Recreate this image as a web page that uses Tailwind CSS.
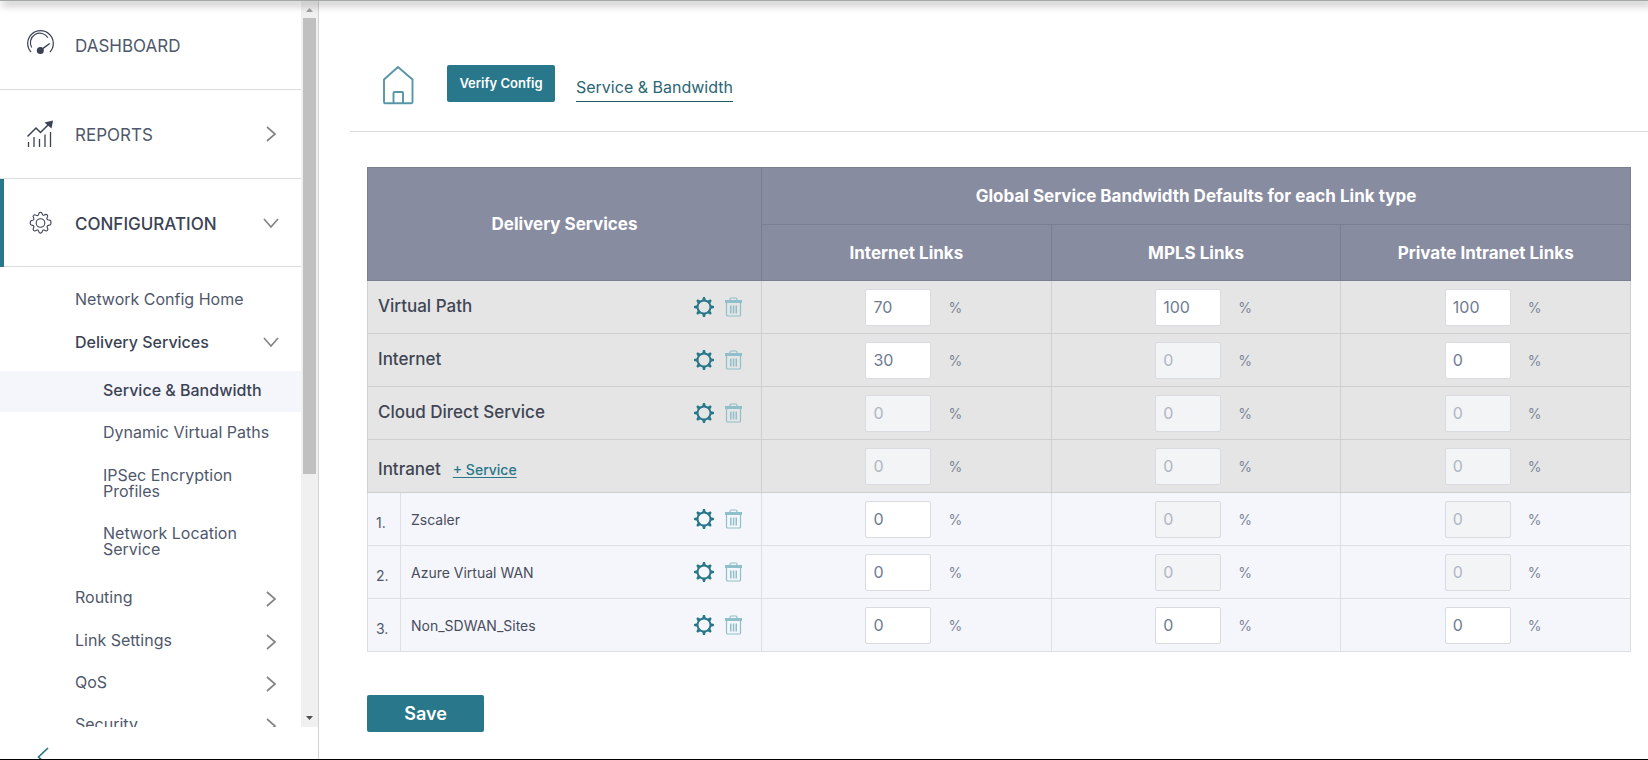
<!DOCTYPE html>
<html lang="en">
<head>
<meta charset="utf-8">
<title>Service &amp; Bandwidth</title>
<script src="https://cdn.jsdelivr.net/npm/@tailwindcss/browser@4"></script>
</head>
<body class="h-screen bg-white font-['Inter','Liberation_Sans',sans-serif] text-[#4f586b]">
<svg class="hidden">
  <symbol id="right" viewBox="0 0 16 16"><path d="M4 1l8 7-8 7" fill="none" stroke="#858585" stroke-width="1.7"/></symbol>
  <symbol id="down" viewBox="0 0 16 16"><path d="M1 4l7 8 7-8" fill="none" stroke="#858585" stroke-width="1.7"/></symbol>
  <symbol id="cog" viewBox="0 0 20 20">
    <circle cx="10" cy="10" r="6.500" fill="none" stroke="#28778a" stroke-width="2"/>
    <path d="M9 0h2l1 4H8zM9 20h2l1-4H8zM0 9v2l4 1V8zM20 9v2l-4 1V8zM2.300 3.700l1.400-1.400 3.500 2-2.900 2.900zM17.700 3.700l-1.400-1.400-3.500 2 2.900 2.900zM2.300 16.300l1.400 1.400 3.500-2-2.900-2.900zM17.700 16.300l-1.400 1.400-3.500-2 2.900-2.900z" fill="#28778a"/>
  </symbol>
  <symbol id="trash" viewBox="0 0 17 20">
    <path d="M5 3.500V2.200C5 1.400 5.500 1 6.200 1h4.600c.7 0 1.200.4 1.200 1.200v1.300M1.500 6v11.700c0 .8.5 1.300 1.300 1.300h11.400c.8 0 1.300-.5 1.300-1.300V6" fill="none" stroke="#8fbfc9" stroke-width="1.200"/>
    <path d="M0 3h17v3H0zM5 8.500h1.500v8H5zM7.800 8.500h1.500v8H7.800zM10.500 8.500H12v8h-1.500z" fill="#8fbfc9"/>
  </symbol>
</svg>
<div class="relative flex h-full flex-col border-b border-black">
  <div class="absolute inset-x-0 top-0 z-10 h-px bg-[#a3a8a6] shadow-[3px_2px_8px_1px_rgba(0,0,0,0.5)]"></div>
  <div class="flex min-h-0 flex-1">
    <aside class="flex w-[319px] shrink-0 flex-col overflow-hidden border-r border-[#d2d3d6]">
      <div class="flex min-h-0 flex-1">
        <nav aria-label="Main" class="min-w-0 flex-1 overflow-hidden pt-px text-[16px] leading-[16px]">
          <a href="#" class="flex h-[89px] items-center border-b border-[#dadbdd] text-[17px]">
            <svg class="ml-[26px] size-[30px] shrink-0" viewBox="0 0 30 30" fill="none" stroke="#3b4254" stroke-width="1.200"><path d="M5 22A12.800 12.800 0 1 1 24 22"/><path d="M5.700 17.500A9.300 9.300 0 0 1 22 7.800"/><path d="M15 19.800l8.700-6.300" stroke-width="1.500"/><circle cx="14.300" cy="20.500" r="3.500" fill="#3b4254" stroke="none"/></svg>
            <span class="ml-[19px] pt-[2px]">DASHBOARD</span>
          </a>
          <a href="#" class="flex h-[89px] items-center border-b border-[#dadbdd] text-[17px]">
            <svg class="ml-[26px] size-[30px] shrink-0" viewBox="0 0 30 30" fill="none" stroke="#3b4254"><path d="M1.500 17.500l8.500-8.500 4.500 4.500 9-9" stroke-width="1.500"/><path d="M18.500 3.500L27 1.500l-1.500 8z" fill="#3b4254" stroke="none"/><path d="M2.500 28v-5M8 28v-10M13.500 28v-8M19 28V15.500M24.500 28V13" stroke-width="1.300"/></svg>
            <span class="ml-[19px] flex-1 pt-[2px]">REPORTS</span>
            <svg class="mr-[22px] size-4"><use href="#right"/></svg>
          </a>
          <a href="#" class="relative flex h-[88px] items-center border-b border-[#dadbdd] text-[17px] font-medium text-[#3b4254]">
            <span class="absolute top-0 -bottom-px left-0 w-1 bg-[#28778a]"></span>
            <svg class="ml-[26px] size-[30px] shrink-0" viewBox="0 0 30 30" fill="none" stroke="#3b4254" stroke-width="1.100" stroke-linejoin="round"><circle cx="14.500" cy="15" r="4.300"/><path d="M12.700 6.200c.2-1.400.7-2 1.800-2s1.600.6 1.800 2c.1.900 1.300 1.300 2.100.8 1.200-.9 2-.9 2.800-.1s.8 1.600-.1 2.800c-.6.800-.1 1.900.9 2.100 1.400.2 2.900.7 2.900 1.900v2.200c0 .9-1.300 1.300-2.700 1.500-1 .2-1.500 1.400-.9 2.200.9 1.200.9 2 .1 2.800s-1.600.8-2.800-.1c-.8-.6-2-.2-2.200.8-.2 1.400-.8 2-1.900 2s-1.700-.6-1.900-2c-.2-1-1.400-1.400-2.200-.8-1.200.9-2 .9-2.800.1s-.8-1.600.1-2.800c.6-.8.100-2-.9-2.200-1.400-.2-2.500-.6-2.500-1.500v-1.800c0-1.200 1.100-1.700 2.500-1.900 1-.2 1.500-1.300.9-2.100-.9-1.200-.9-2-.1-2.800s1.600-.8 2.800.1c.8.500 2.100.1 2.300-.9z"/></svg>
            <span class="ml-[19px] flex-1 pt-[2px]">CONFIGURATION</span>
            <svg class="mr-[22px] size-4"><use href="#down"/></svg>
          </a>
          <div class="flex flex-col pt-[10px]">
            <a href="#" class="flex h-[43px] items-center pl-[75px]">Network Config Home</a>
            <a href="#" class="flex h-[43px] items-center pr-[22px] pl-[75px] text-[#3b4254]"><span class="flex-1 font-medium">Delivery Services</span><svg class="size-4"><use href="#down"/></svg></a>
            <a href="#" aria-current="page" class="mt-[8px] flex h-[41px] items-center bg-[#f5f6fb] pb-[3px] pl-[103px] font-medium text-[#3b4254]">Service &amp; Bandwidth</a>
            <a href="#" class="flex h-[42px] items-center pb-[2px] pl-[103px]">Dynamic Virtual Paths</a>
            <a href="#" class="flex h-[58px] items-center pr-10 pl-[103px]">IPSec Encryption Profiles</a>
            <a href="#" class="flex h-[58px] items-center pr-10 pl-[103px]">Network Location Service</a>
            <a href="#" class="mt-[6px] flex h-[42px] items-center pr-[22px] pl-[75px]"><span class="flex-1">Routing</span><svg class="mt-1 size-4"><use href="#right"/></svg></a>
            <a href="#" class="flex h-[43px] items-center pr-[22px] pl-[75px]"><span class="flex-1">Link Settings</span><svg class="mt-1 size-4"><use href="#right"/></svg></a>
            <a href="#" class="flex h-[42px] items-center pr-[22px] pl-[75px]"><span class="flex-1">QoS</span><svg class="mt-1 size-4"><use href="#right"/></svg></a>
            <a href="#" class="flex h-[42px] items-center pr-[22px] pl-[75px]"><span class="flex-1">Security</span><svg class="mt-1 size-4"><use href="#right"/></svg></a>
          </div>
        </nav>
        <div class="flex w-[17px] shrink-0 flex-col bg-[#f0f0f0]" aria-hidden="true">
          <svg class="h-[18px] w-[17px] shrink-0" viewBox="0 0 17 18"><path d="M5 12h7l-3.500-4z" fill="#a0a0a0"/></svg>
          <div class="min-h-0 flex-1 px-[2px]"><div class="h-[66%] bg-[#c0c0c0]"></div></div>
          <svg class="h-[18px] w-[17px] shrink-0" viewBox="0 0 17 18"><path d="M5 7h7l-3.500 4z" fill="#505050"/></svg>
        </div>
      </div>
      <div class="h-8 shrink-0 overflow-hidden pt-[20px] pl-[36px]">
        <button type="button" aria-label="Collapse menu" class="block"><svg class="h-[20px] w-[14px]" viewBox="0 0 14 20" fill="none" stroke="#28778a" stroke-width="1.700"><path d="M12 1L2.500 10l9.500 9"/></svg></button>
      </div>
    </aside>

    <main class="min-w-0 flex-1 overflow-hidden">
      <header class="ml-[31px] flex h-[132px] items-start border-b border-[#d9dadc] pt-[65px] pl-8">
        <a href="#" aria-label="Home"><svg class="h-10 w-8" viewBox="0 0 32 40" fill="none" stroke="#5796a5" stroke-width="1.900" stroke-linejoin="round"><path d="M2 14.500L16 2l14.500 12.500V37c0 .7-.4 1.200-1.200 1.200H2.700c-.4 0-.7-.5-.7-1.200z"/><path d="M11.500 38V28c0-.7.4-1 1-1h7.500c.6 0 1 .3 1 1v10"/></svg></a>
        <button type="button" class="ml-[33px] h-[37px] w-[108px] rounded-[2px] bg-[#28778a] text-[13px] font-semibold text-white">Verify Config</button>
        <a href="#" class="ml-[21px] flex h-[37px] items-end border-b border-[#1f5b63] pb-[4px] text-[16px] leading-[20px] text-[#2a6673]">Service &amp; Bandwidth</a>
      </header>

      <form class="mt-[35px] mr-[17px] ml-12">
        <table class="w-full table-fixed border-collapse">
          <colgroup><col class="w-[33px]"><col class="w-[361px]"><col><col><col></colgroup>
          <thead class="bg-[#888ca0] text-[17px] leading-[20px] font-bold text-white">
            <tr>
              <th colspan="2" rowspan="2" scope="col" class="border border-[#7b7e91]">Delivery Services</th>
              <th colspan="3" scope="colgroup" class="h-[57px] border border-[#7b7e91]">Global Service Bandwidth Defaults for each Link type</th>
            </tr>
            <tr>
              <th scope="col" class="h-[56px] border border-[#7b7e91]">Internet Links</th>
              <th scope="col" class="h-[56px] border border-[#7b7e91]">MPLS Links</th>
              <th scope="col" class="h-[56px] border border-[#7b7e91]">Private Intranet Links</th>
            </tr>
          </thead>
          <tbody id="rows"></tbody>
        </table>
        <button type="button" class="mt-[43px] block h-[37px] w-[117px] rounded-[2px] bg-[#28778a] text-[18px] font-semibold text-white">Save</button>
      </form>
    </main>
  </div>
</div>
<script>
// A null value is a link type the service cannot use: its field is disabled and shows 0.
const services = [
  { name: 'Virtual Path', values: [70, 100, 100] },
  { name: 'Internet', values: [30, null, 0] },
  { name: 'Cloud Direct Service', values: [null, null, null] },
  { name: 'Intranet', group: true, values: [null, null, null] },
  { name: 'Zscaler', index: 1, values: [0, null, null] },
  { name: 'Azure Virtual WAN', index: 2, values: [0, null, null] },
  { name: 'Non_SDWAN_Sites', index: 3, values: [0, 0, 0] },
];
const links = ['Internet Links', 'MPLS Links', 'Private Intranet Links'];

const actions = name => `
  <span class="flex gap-[11px]">
    <button type="button" aria-label="Configure ${name}"><svg class="block size-5"><use href="#cog"/></svg></button>
    <button type="button" aria-label="Delete ${name}"><svg class="block h-5 w-[17px]"><use href="#trash"/></svg></button>
  </span>`;

const field = (s, v, i) => `
  <td class="border ${s.index ? 'border-[#dcdee2]' : 'border-[#cfcfcf]'} p-0">
    <div class="flex items-center justify-center gap-[17px] pl-[15px] text-[14px] text-[#7c8597]">
      <input type="text" aria-label="${s.name}, ${links[i]}" value="${v ?? 0}" ${v === null ? 'disabled' : ''}
        class="h-[37px] w-[66px] rounded-[2px] border border-[#d9dbe0] bg-white px-[7px] text-[16px] text-[#6f7b91] disabled:bg-[#f3f4f6] disabled:text-[#b0b6c2]"><span>%</span>
    </div>
  </td>`;

const heading = s => {
  if (s.index) return `
    <td class="border border-[#dcdee2] p-0 pt-[6px] pl-[8px] text-[14px]">${s.index}.</td>
    <th scope="row" class="border border-[#dcdee2] p-0 text-left text-[14px] font-normal text-[#474d5b]">
      <div class="flex items-center justify-between pr-[19px] pl-[10px]">${s.name}${actions(s.name)}</div></th>`;
  if (s.group) return `
    <th scope="row" colspan="2" class="border border-[#cfcfcf] p-0 text-left text-[17px] font-medium text-[#3f4554]">
      <div class="flex items-baseline gap-3 pt-[8px] pl-[10px]">${s.name}<a href="#" class="text-[14px] text-[#28778a] underline underline-offset-2">+ Service</a></div></th>`;
  return `
    <th scope="row" colspan="2" class="border border-[#cfcfcf] p-0 text-left text-[17px] font-medium text-[#3f4554]">
      <div class="flex items-center justify-between pr-[19px] pl-[10px]">${s.name}${actions(s.name)}</div></th>`;
};

document.getElementById('rows').innerHTML = services.map(s =>
  `<tr class="h-[53px] ${s.index ? 'bg-[#f5f6fb]' : 'bg-[#e5e5e5]'}">${heading(s)}${s.values.map((v, i) => field(s, v, i)).join('')}</tr>`).join('');
</script>
</body>
</html>
